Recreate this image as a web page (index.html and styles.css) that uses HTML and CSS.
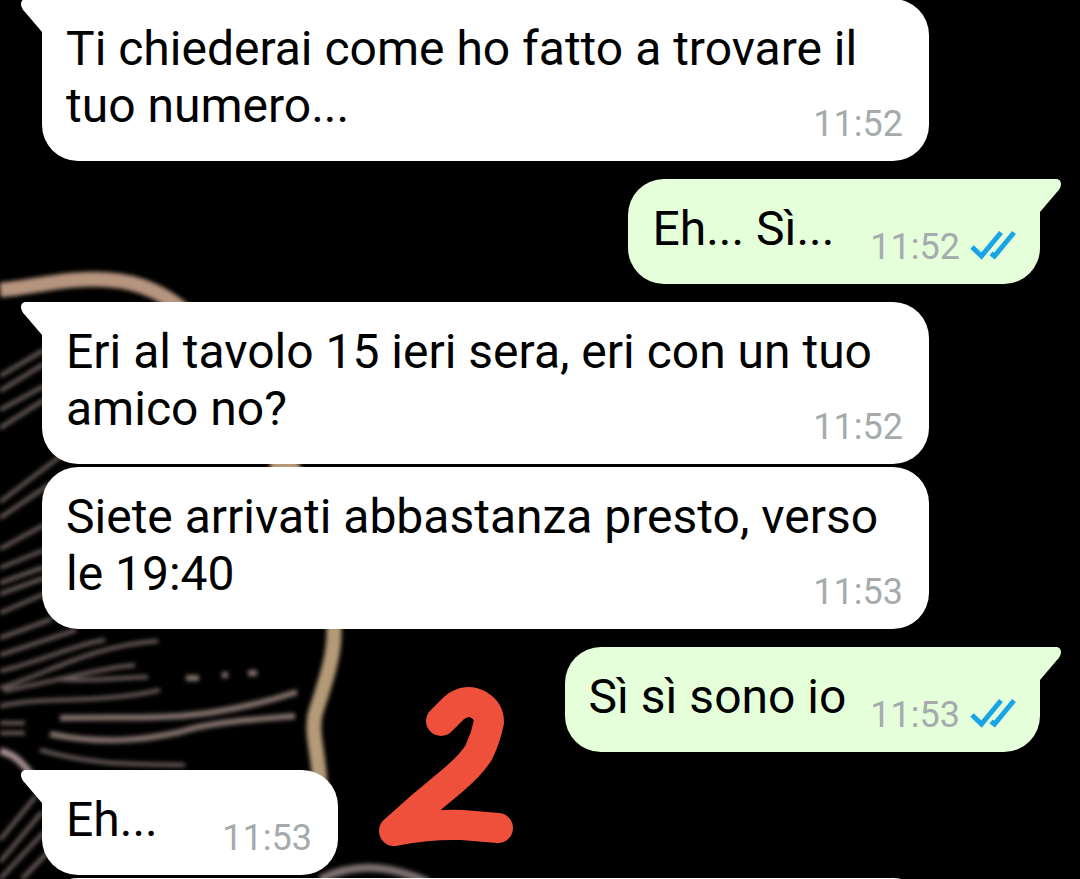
FILE: index.html
```
<!DOCTYPE html>
<html lang="it">

<head>
    <meta charset="UTF-8">
    <meta name="viewport" content="width=device-width, initial-scale=1.0">
    <title>Chat</title>
    <link rel="stylesheet" href="styles.css">
</head>

<body>
    <svg width="0" height="0" class="symbols">
        <symbol id="tail" viewBox="0 0 22 34">
            <path d="M22 0H5C0 0 -1 5 1 9C2 11 3 12 4 13L21 33L22 34Z" />
        </symbol>
        <symbol id="ticks" viewBox="0 0 46 30">
            <path d="M2 17L11.500 26L31 2.500M21 23.500L24.500 26L44 2.500" />
        </symbol>
    </svg>

    <!-- wallpaper -->
    <svg class="wallpaper" width="480" height="879" viewBox="0 0 480 879" aria-hidden="true">
        <g class="strands">
            <path d="M0 376L44 350M0 391L44 364M0 410L44 386M0 428L44 400M0 502L62 455M0 518L50 484M0 549L44 525M0 568L44 550M0 583L44 567M0 594L44 578M0 613L44 594" />
            <path d="M0 638L52 619M0 655L76 630M0 671C40 662 75 644 105 640" />
            <path d="M0 688C50 673 90 646 158 641M4 691C60 680 100 668 135 665" />
            <path d="M58 679C90 682 115 678 148 677M0 706C50 695 95 705 160 690" />
            <path d="M0 723H25M0 733H25M40 750C90 764 120 764 185 765" />
            <path d="M0 840L36 796M0 862L42 812M0 879L44 832M22 879L50 850" />
        </g>
        <g class="strands wide">
            <path d="M60 718C100 717 130 718 160 717C210 716 260 704 297 692" />
            <path d="M50 734C100 744 140 741 180 732C210 722 260 719 295 716" />
            <path d="M186 678H199M225 678V672M248 673H257" />
        </g>
        <g class="cords">
            <path d="M0 290C30 288 72 276 110 280C140 282 166 294 188 314" />
            <path class="gold" d="M270 467H292C330 520 335 590 334 628C335 660 322 690 315 715C311 735 319 755 320 785" />
            <path class="thin" d="M0 751C14 754 22 762 34 778" />
            <path class="dim" d="M320 879C350 865 382 862 428 882" />
        </g>
    </svg>

    <main class="chat">
        <p class="bubble in tailed">
            <svg class="tail"><use href="#tail" /></svg>
            Ti chiederai come ho fatto a trovare il tuo numero...
            <span class="meta"><time>11:52</time></span>
        </p>
        <p class="bubble out tailed">
            <svg class="tail"><use href="#tail" /></svg>
            Eh... Sì...&nbsp;
            <span class="meta"><time>11:52</time><svg class="ticks" role="img" aria-label="Letto"><use href="#ticks" /></svg></span>
        </p>
        <p class="bubble in tailed">
            <svg class="tail"><use href="#tail" /></svg>
            Eri al tavolo 15 ieri sera, eri con un tuo amico no?
            <span class="meta"><time>11:52</time></span>
        </p>
        <p class="bubble in">
            Siete arrivati abbastanza presto, verso le 19:40
            <span class="meta"><time>11:53</time></span>
        </p>
        <p class="bubble out tailed">
            <svg class="tail"><use href="#tail" /></svg>
            Sì sì sono io
            <span class="meta"><time>11:53</time><svg class="ticks" role="img" aria-label="Letto"><use href="#ticks" /></svg></span>
        </p>
        <p class="bubble in tailed">
            <svg class="tail"><use href="#tail" /></svg>
            Eh...
            <span class="meta"><time>11:53</time></span>
        </p>
        <div class="bubble in next"></div>
    </main>

    <!-- hand-drawn number -->
    <svg class="mark" width="136" height="160" viewBox="0 0 136 160" role="img" aria-label="2">
        <path d="M63 35L76 22Q88 12 101 19Q111 25 111 36Q108 51 101 66Q93 79 74 95L44 120L16 145Q50 138 84 139L120 142" />
    </svg>
</body>

</html>
```
FILE: styles.css
```
body {
    background: #000000;
    color: #000000;
    font-family: Roboto, "Liberation Sans", sans-serif;
    font-size: 48px;
    line-height: 57px;
    margin: 0;
}

.symbols,
.wallpaper,
.mark {
    position: absolute;
}

.wallpaper {
    fill: none;
    left: 0;
    top: 0;
}

.strands {
    filter: blur(2px);
    stroke: #6b5f5c;
    stroke-width: 4;
}

.strands.wide {
    stroke: #85736e;
    stroke-width: 6;
}

.cords {
    filter: blur(2px);
    stroke: #b6957f;
    stroke-width: 15;
}

.cords .gold {
    stroke: #b59a78;
}

.cords .thin {
    stroke: #a58d90;
    stroke-width: 7;
}

.cords .dim {
    stroke: #7e7071;
    stroke-width: 8;
}

.chat {
    box-sizing: border-box;
    display: flex;
    flex-direction: column;
    height: 100vh;
    overflow: hidden;
    padding: 0 40px 0 42px;
    position: relative;
}

.bubble {
    border-radius: 36px;
    box-sizing: border-box;
    flex: none;
    margin: 3px 0 0;
    max-width: calc(100% - 111px);
    min-width: 296px;
    padding: 21px 26px 27px 24px;
    position: relative;
}

.bubble.tailed {
    margin-top: 18px;
}

.bubble.tailed:first-child {
    margin-top: -1px;
}

.in {
    align-self: flex-start;
    background: #ffffff;
    fill: #ffffff;
}

.out {
    align-self: flex-end;
    background: #e5ffdb;
    fill: #e5ffdb;
    padding-right: 24px;
}

.in.tailed {
    border-top-left-radius: 0;
}

.out.tailed {
    border-top-right-radius: 0;
}

.tail {
    height: 34px;
    position: absolute;
    top: 0;
    width: 22px;
}

.in .tail {
    left: -21px;
}

.out .tail {
    right: -21px;
    transform: scaleX(-1);
}

.meta {
    align-items: center;
    color: #a5abad;
    display: flex;
    float: right;
    font-size: 36px;
    gap: 10px;
    line-height: 42px;
    margin: 26px 0 -11px 24px;
}

.ticks {
    fill: none;
    height: 30px;
    margin-top: -4px;
    stroke: #18a5e6;
    stroke-width: 5;
    width: 46px;
}

.next {
    height: 105px;
    width: 100%;
}

.mark {
    fill: none;
    left: 378px;
    stroke: #ef503b;
    stroke-linecap: round;
    stroke-linejoin: round;
    stroke-width: 30;
    top: 686px;
}
```
